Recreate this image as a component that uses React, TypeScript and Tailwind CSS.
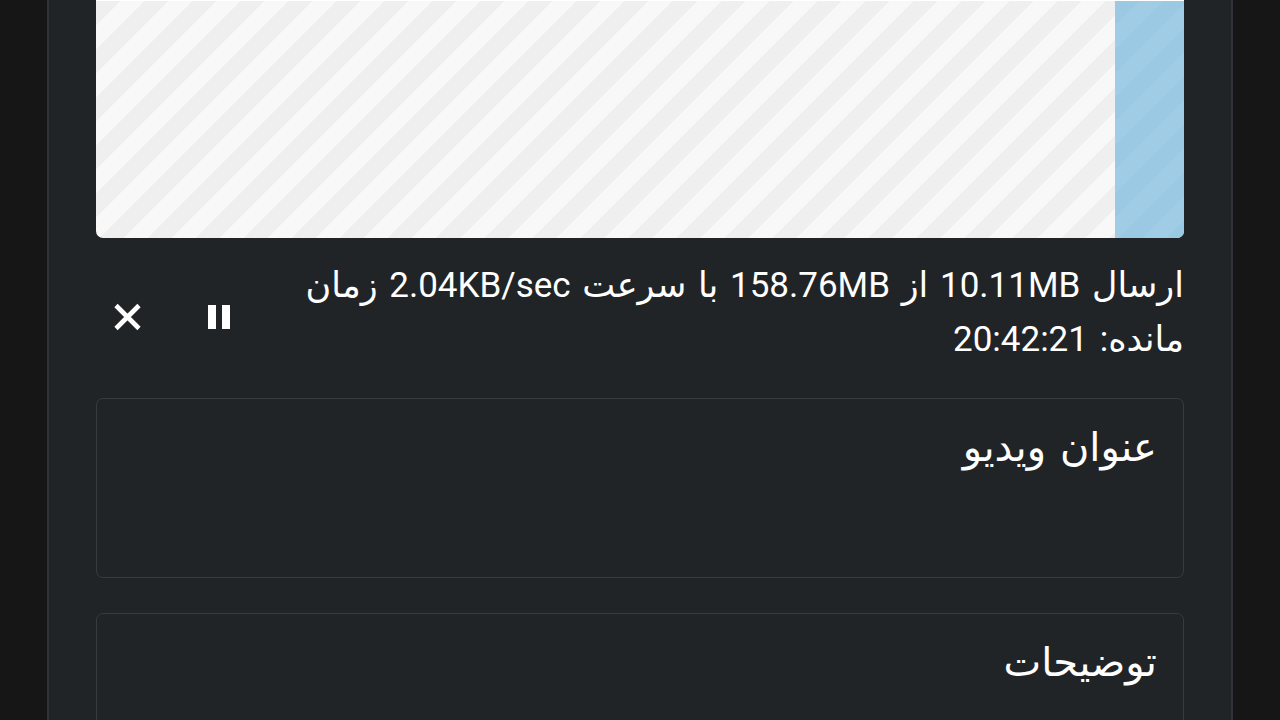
const font = { fontFamily: 'Roboto, "DejaVu Sans", "Noto Sans", sans-serif' }

function Field({ label }: { label: string }) {
  return (
    <div className="h-[180px] rounded-[7px] border-[1.5px] border-[#373b3f] bg-[#212427] px-[26px] pt-[23px]">
      <p className="text-[40px] leading-[52px] text-white [word-spacing:4px]">{label}</p>
    </div>
  )
}

export default function App() {
  return (
    <div className="flex h-[720px] w-full justify-center overflow-hidden bg-[#161616]" style={font}>
      <div dir="rtl" className="h-full w-[1186px] border-x-2 border-[#2f3236] bg-[#212427] px-[47px]">
        {/* نوار پیشرفت */}
        <div className="flex h-[238px] overflow-hidden rounded-b-[7px] border-t border-white bg-[repeating-linear-gradient(135deg,#efefef_0px,#efefef_17px,#f8f8f8_17px,#f8f8f8_34px)]">
          <div className="h-full w-[69px] bg-[repeating-linear-gradient(135deg,#9bc9e4_0px,#9bc9e4_17px,#a0cce6_17px,#a0cce6_34px)]" />
        </div>

        {/* وضعیت ارسال */}
        <div className="mt-[21px] flex items-center">
          <div className="flex-1 whitespace-nowrap text-[35px] leading-[54px] text-white [word-spacing:3px]">
            <p>ارسال 10.11MB از 158.76MB با سرعت 2.04KB/sec زمان</p>
            <p>مانده: 20:42:21</p>
          </div>
          <div className="mt-[8px] flex items-center gap-[66px] pl-[17px]">
            <button className="flex items-center justify-center">
              <svg width="22" height="24" viewBox="0 0 22 24">
                <rect x="0" y="0" width="8" height="24" fill="white" />
                <rect x="14" y="0" width="8" height="24" fill="white" />
              </svg>
            </button>
            <button className="flex items-center justify-center">
              <svg width="29" height="28" viewBox="0 0 29 28">
                <path d="M3 2.5 26 25.5M26 2.5 3 25.5" stroke="white" strokeWidth="4.6" />
              </svg>
            </button>
          </div>
        </div>

        <div className="mt-[31px] flex flex-col gap-[35px]">
          <Field label="عنوان ویدیو" />
          <Field label="توضیحات" />
        </div>
      </div>
    </div>
  )
}
